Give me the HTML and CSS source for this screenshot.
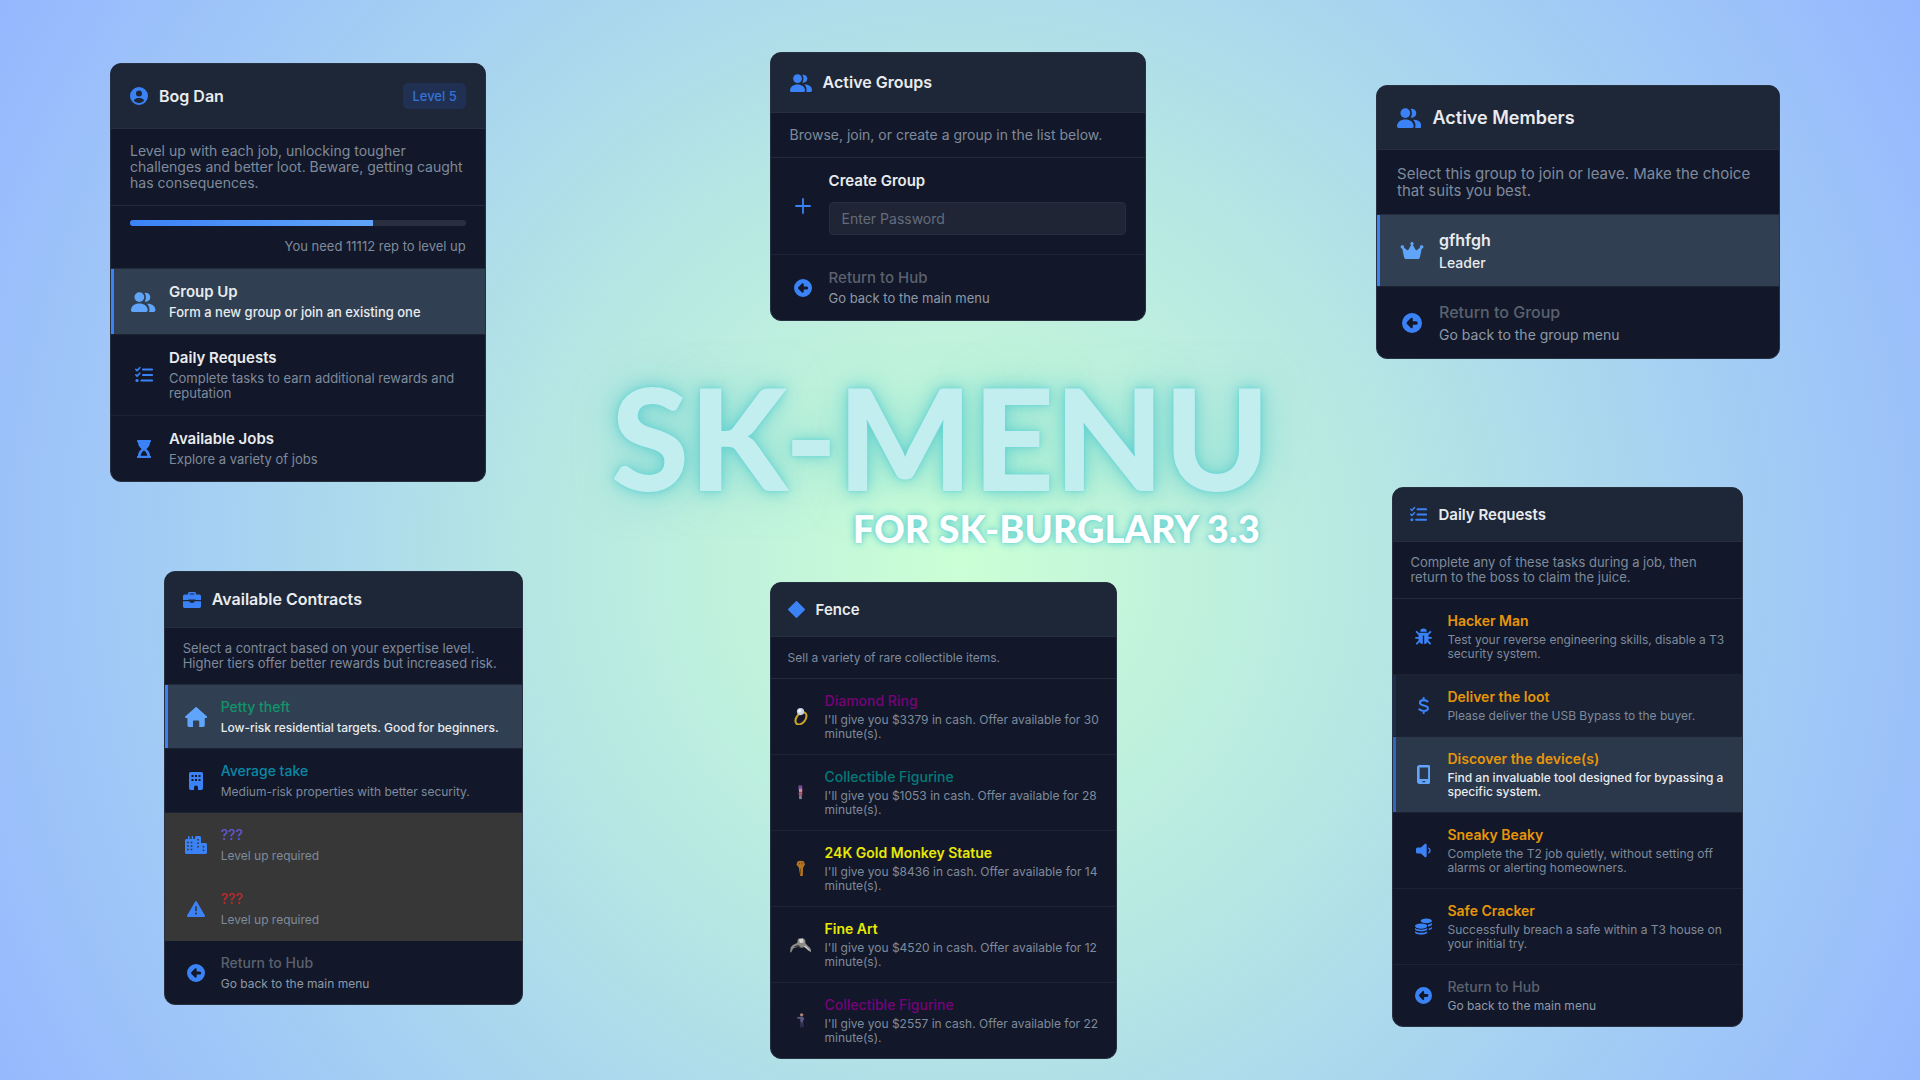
FILE: index.html
```html
<!DOCTYPE html>
<html lang="en">
<head>
<meta charset="utf-8">
<meta name="viewport" content="width=device-width, initial-scale=1">
<title>SK-MENU for SK-BURGLARY 3.3</title>
<link rel="stylesheet" href="styles.css">
</head>
<body>
<svg class="sprite" aria-hidden="true">
  <defs>
    <g id="i-user"><path fill-rule="evenodd" d="M9 0a9 9 0 1 0 0 18A9 9 0 0 0 9 0Zm0 3.600a3 3 0 1 1 0 6 3 3 0 0 1 0-6ZM3.800 13.200C4.900 11.600 7 11 9 11s4.100.6 5.200 2.200C13.100 15 11.200 16 9 16s-4.100-1-5.200-2.800Z"/></g>
    <g id="i-people"><circle cx="7.500" cy="4.600" r="4.400"/><path d="M0 16.500C0 12.600 3.400 10.400 7.500 10.400s7.500 2.200 7.500 6.100c0 .9-.6 1.500-1.500 1.500h-12C.6 18 0 17.400 0 16.500Z"/><path d="M12.300.8a4 4 0 1 1 0 7.700C13.800 6.300 13.800 3 12.300.8Z"/><path d="M14.500 10.500c4.300-.2 7.500 2 7.500 5.800 0 1-.6 1.700-1.500 1.700h-4.200c.9-3-.1-5.800-1.800-7.500Z"/></g>
    <g id="i-list"><g fill="none" stroke="currentColor" stroke-width="2.200" stroke-linecap="round" stroke-linejoin="round"><path d="M8 3.500h9M8 9h9M6.500 14.500H17"/><path stroke-width="1.600" d="M.9 3.400 2.100 4.600 4.800 1.700M.9 8.900l1.200 1.200 2.700-2.900"/></g><circle cx="2" cy="14.500" r="1.600"/></g>
    <g id="i-hourglass"><path fill-rule="evenodd" d="M1 0h12a1 1 0 0 1 0 2.200c0 3-1.300 4.900-3.600 6.800 2.300 1.900 3.600 3.800 3.600 6.800a1 1 0 0 1 0 2.200H1a1 1 0 0 1 0-2.200c0-3 1.300-4.900 3.600-6.800C2.300 7.100 1 5.200 1 2.200A1 1 0 0 1 1 0Zm6 10.600c-1.800 1.500-3 2.900-3.400 5.200h6.800C10 13.500 8.800 12.100 7 10.600Z"/></g>
    <g id="i-plus"><path d="M8 2v14M1 9h14" fill="none" stroke="currentColor" stroke-width="1.800" stroke-linecap="round"/></g>
    <g id="i-back"><path fill-rule="evenodd" d="M9 0a9 9 0 1 0 0 18A9 9 0 0 0 9 0ZM8 4.600c.8-.7 1.700-.1 1.700.8v2.100h3a1.500 1.500 0 0 1 0 3h-3v2.100c0 .9-.9 1.500-1.700.8L4.500 9.900a1.200 1.200 0 0 1 0-1.800Z"/></g>
    <g id="i-crown"><path d="M12 1a1.700 1.700 0 0 1 .9 3.100l2.500 4.500c.4.700 1.100.8 1.700.3l3-2.300a1.700 1.700 0 1 1 1.700 1l-1.900 8.600c-.2 1.100-.9 1.800-2 1.800H6.100c-1.100 0-1.800-.7-2-1.800L2.200 7.600a1.700 1.700 0 1 1 1.700-1l3 2.300c.6.500 1.300.4 1.700-.3l2.500-4.500A1.700 1.700 0 0 1 12 1Z"/></g>
    <g id="i-case"><path fill-rule="evenodd" d="M5 3.400V2.500C5 1.700 5.700 1 6.500 1h5c.8 0 1.500.7 1.500 1.500v.9h3.200c1 0 1.800.8 1.800 1.800V9h-5.500V8.500h-7V9H0V5.200c0-1 .8-1.800 1.800-1.800H5Zm1.600 0h4.800v-.8H6.600v.8ZM0 10.300h6.700v.7c0 .5.300.8.8.8h3c.5 0 .8-.3.8-.8v-.7H18v4.900c0 1-.8 1.800-1.800 1.800H1.800c-1 0-1.800-.8-1.800-1.800v-4.900Z"/></g>
    <g id="i-house"><path d="M9.300.4c.4-.4 1-.4 1.400 0l8.900 7.900c.8.700.4 1.700-.6 1.700h-1.200v6.500c0 .9-.6 1.500-1.500 1.500h-3.500v-4.800c0-.6-.4-1-1-1H8.200c-.6 0-1 .4-1 1V18H3.700c-.9 0-1.500-.6-1.500-1.500V10H1c-1 0-1.400-1-.6-1.700Z"/></g>
    <g id="i-building"><path fill-rule="evenodd" d="M1.700 0h10.600C13.200 0 14 .8 14 1.700v14.600c0 .9-.8 1.700-1.700 1.700H9v-2.500a2 2 0 0 0-4 0V18H1.700C.8 18 0 17.200 0 16.300V1.700C0 .8.800 0 1.700 0ZM2.500 3v2h2V3Zm3.500 0v2h2V3Zm3.500 0v2h2V3Zm-7 4v2h2V7ZM6 7v2h2V7Zm3.500 0v2h2V7Z"/></g>
    <g id="i-city"><path fill-rule="evenodd" d="M3 .8a.8.8 0 0 1 1.600 0V3h2V.8a.8.8 0 0 1 1.600 0V3h1.800V1.500C10 .7 10.700 0 11.500 0h3c.8 0 1.500.7 1.500 1.500V7h4.500c.8 0 1.500.7 1.500 1.500v8c0 .8-.7 1.500-1.500 1.500h-19C.7 18 0 17.300 0 16.500v-12C0 3.700.7 3 1.500 3H3ZM2.200 5.700v1.600h1.600V5.700Zm3.500 0v1.600h1.600V5.700Zm-3.500 3.500v1.600h1.600V9.200Zm3.500 0v1.600h1.600V9.200Zm-3.500 3.500v1.600h1.600v-1.600Zm3.500 0v1.600h1.600v-1.600ZM12.200 3v1.600h1.600V3Zm0 3.500v1.600h1.600V6.500Zm0 3.500v1.600h1.600V10Zm5.500 0v1.600h1.600V10Zm0 3.500v1.600h1.600v-1.600Z"/></g>
    <g id="i-warn"><path fill-rule="evenodd" d="M8.100 1.700c.4-.8 1.400-.8 1.800 0l7.900 13.600c.5.800 0 1.700-1 1.700H1.200c-1 0-1.500-.9-1-1.700ZM8.200 6.200v5h1.600v-5ZM9 12.400a1.100 1.100 0 1 0 0 2.200 1.100 1.100 0 0 0 0-2.200Z"/></g>
    <g id="i-diamond"><path d="M8.200.4c.5-.5 1.100-.5 1.600 0l7.800 7.800c.5.500.5 1.100 0 1.600l-7.800 7.800c-.5.500-1.100.5-1.600 0L.4 9.800c-.5-.5-.5-1.100 0-1.600Z"/></g>
    <g id="i-bug"><path d="M5.500 4a3.500 3.500 0 0 1 7 0Z"/><path d="M5 5h8c1 1 1.300 2 1.300 3.500v3.300c0 2.700-1.900 4.900-4.600 5.200V8H8.300v9c-2.700-.3-4.600-2.500-4.600-5.200V8.500C3.700 7 4 6 5 5Z"/><path fill="none" stroke="currentColor" stroke-width="1.900" stroke-linecap="round" d="M4.500 6.700 1.700 4M13.500 6.700 16.300 4M4 10.400H1M14 10.400h3M4.700 13.700 2 16.500M13.300 13.700l2.700 2.800"/></g>
    <g id="i-dollar"><path fill="none" stroke="currentColor" stroke-width="2.200" stroke-linecap="round" d="M6 1v2.200m0 11.600V17M10 4.600C8.800 3.800 7.400 3.300 6 3.300c-2.200 0-4 1-4 2.700 0 3.900 8.500 2.100 8.500 6 0 1.800-2 2.800-4.300 2.800-1.800 0-3.300-.6-4.700-1.600"/></g>
    <g id="i-phone"><path fill-rule="evenodd" d="M2.300 0h8.400C12 0 13 1 13 2.300v13.400c0 1.300-1 2.300-2.300 2.300H2.300C1 18 0 17 0 15.700V2.300C0 1 1 0 2.300 0Zm.2 2.300v11h8v-11Zm2.700 12.800v1.200h2.600v-1.200Z"/></g>
    <g id="i-horn"><path d="M9.200 2.200C10 1.500 11.300 2 11.300 3.200v11.600c0 1.200-1.300 1.700-2.100 1l-4-3.500H2c-1 0-2-.7-2-1.700V7.400c0-1 1-1.700 2-1.700h3.200Z"/><path fill="none" stroke="currentColor" stroke-width="1.500" stroke-linecap="round" d="M13.500 6.600c1.800 1.100 1.800 3.700 0 4.800"/></g>
    <g id="i-coins"><ellipse cx="12" cy="3" rx="6" ry="2.500"/><path d="M13.500 7c2-.1 3.700-.8 4.500-1.700v1.200c0 1.200-1.700 2.100-4 2.400Zm1 4c1.600-.2 2.800-.8 3.500-1.500v1.200c0 1-1.400 2-3.500 2.300Z"/><ellipse cx="6.500" cy="8.500" rx="6.500" ry="2.800"/><path d="M0 10.700c2.800 2.300 10.200 2.300 13 0v1c0 3.300-13 3.300-13 0ZM0 14c2.800 2.300 10.200 2.300 13 0v1.200c0 3.400-13 3.400-13 0Z"/></g>
    <g id="i-ring"><ellipse cx="9.500" cy="11" rx="7.300" ry="4.700" fill="none" stroke="#c9a227" stroke-width="2.200" transform="rotate(-52 9.500 11)"/><circle cx="9" cy="3.800" r="3.800" fill="#c9d3e6"/><circle cx="8" cy="3" r="1.600" fill="#f2f6ff"/></g>
    <g id="i-figure"><path fill="#7c4a9c" d="M.5 1.500h4V6h-4z"/><path fill="#c98a9d" d="M1 5h3.500v4H1z"/><path fill="#b7566a" d="M.8 9h3.700v3H.8z"/><path fill="#8f8296" d="M1.200 12h2.800v4H1.200z"/></g>
    <g id="i-monkey"><path fill="#b37422" d="M1.500 1.500C3.500.7 6.500.7 8.500 1.500L9.500 5 7.500 8l-.3 9H4.500L3 8 .5 5Z"/><path fill="#7d4c12" d="M3 3h1.200v1.500H3zm3 0h1.200v1.500H6zM4.300 9h1v6h-1z"/></g>
    <g id="i-art"><path fill="#8d8b88" d="M0 17.500.8 12 3 9.500 7.500 7.500 8.500 3l5-1 2.500 2 .5 4 5 5 1.500 4.500-3-1.500-4.500-4-3.500.5-3.500-1-5 1.500L1.500 17Z"/><path fill="#d9d7d3" d="M9.500 3.500 13.500 3l1 4-4 .5Zm6.500 6.500 5 5-.5.500L15 11Z"/><path fill="#3f3d3d" d="M4 11.500 8 9.500l3 1-1.500 1.500-3-.2Z"/></g>
    <g id="i-hero"><circle cx="6" cy="3" r="1.800" fill="#b08474"/><path fill="#5d5784" d="M1 5.500 4.500 5h3L9 8 7.500 8.500 7.700 11h-3L4.500 7.500 1 7Z"/><path fill="#3a3a5c" d="M4.700 11h3L8 16.500H7L6.200 12.500 5.500 16.500h-1Z"/></g>
  </defs>
</svg>

<main class="board">
  <div class="column column-left">
    <section class="panel panel-hub size-m">
      <header class="head">
        <svg class="icon" viewBox="0 0 18 18"><use href="#i-user"/></svg>
        <h2>Bog Dan</h2>
        <span class="badge">Level 5</span>
      </header>
      <p class="about">Level up with each job, unlocking tougher challenges and better loot. Beware, getting caught has consequences.</p>
      <div class="level">
        <progress value="723" max="1000" aria-labelledby="rep"></progress>
        <p id="rep">You need 11112 rep to level up</p>
      </div>
      <ul class="menu">
        <li><button class="row active"><span class="slot"><svg class="icon large" viewBox="0 0 22 18"><use href="#i-people"/></svg></span><span class="text"><b>Group Up</b><small>Form a new group or join an existing one</small></span></button></li>
        <li><button class="row"><span class="slot"><svg class="icon" viewBox="0 0 18 18"><use href="#i-list"/></svg></span><span class="text"><b>Daily Requests</b><small>Complete tasks to earn additional rewards and reputation</small></span></button></li>
        <li><button class="row"><span class="slot"><svg class="icon" viewBox="0 0 14 18"><use href="#i-hourglass"/></svg></span><span class="text"><b>Available Jobs</b><small>Explore a variety of jobs</small></span></button></li>
      </ul>
    </section>

    <section class="panel panel-contracts size-s">
      <header class="head">
        <svg class="icon" viewBox="0 0 18 18"><use href="#i-case"/></svg>
        <h2>Available Contracts</h2>
      </header>
      <p class="about">Select a contract based on your expertise level. Higher tiers offer better rewards but increased risk.</p>
      <ul class="menu">
        <li><button class="row active"><span class="slot"><svg class="icon large" viewBox="0 0 20 18"><use href="#i-house"/></svg></span><span class="text"><b class="plain green">Petty theft</b><small>Low-risk residential targets. Good for beginners.</small></span></button></li>
        <li><button class="row"><span class="slot"><svg class="icon" viewBox="0 0 14 18"><use href="#i-building"/></svg></span><span class="text"><b class="plain cyan">Average take</b><small>Medium-risk properties with better security.</small></span></button></li>
        <li><button class="row locked"><span class="slot"><svg class="icon" viewBox="0 0 22 18"><use href="#i-city"/></svg></span><span class="text"><b class="plain indigo">???</b><small>Level up required</small></span></button></li>
        <li><button class="row locked"><span class="slot"><svg class="icon" viewBox="0 0 18 18"><use href="#i-warn"/></svg></span><span class="text"><b class="plain red">???</b><small>Level up required</small></span></button></li>
        <li><button class="row back"><span class="slot"><svg class="icon" viewBox="0 0 18 18"><use href="#i-back"/></svg></span><span class="text"><b class="plain">Return to Hub</b><small>Go back to the main menu</small></span></button></li>
      </ul>
    </section>
  </div>

  <div class="column column-center">
    <section class="panel panel-groups size-m">
      <header class="head">
        <svg class="icon" viewBox="0 0 22 18"><use href="#i-people"/></svg>
        <h2>Active Groups</h2>
      </header>
      <p class="about">Browse, join, or create a group in the list below.</p>
      <ul class="menu">
        <li class="row"><span class="slot"><svg class="icon" viewBox="0 0 16 18"><use href="#i-plus"/></svg></span><span class="text"><label for="group-password">Create Group</label><input id="group-password" type="password" placeholder="Enter Password"></span></li>
        <li><button class="row back"><span class="slot"><svg class="icon" viewBox="0 0 18 18"><use href="#i-back"/></svg></span><span class="text"><b class="plain">Return to Hub</b><small>Go back to the main menu</small></span></button></li>
      </ul>
    </section>

    <div class="brand">
      <h1>SK-MENU</h1>
      <p>FOR SK-BURGLARY 3.3</p>
    </div>

    <section class="panel panel-fence size-xs">
      <header class="head">
        <svg class="icon" viewBox="0 0 18 18"><use href="#i-diamond"/></svg>
        <h2>Fence</h2>
      </header>
      <p class="about">Sell a variety of rare collectible items.</p>
      <ul class="menu">
        <li><button class="row"><span class="slot"><svg class="icon" viewBox="0 0 18 18"><use href="#i-ring"/></svg></span><span class="text"><b class="plain purple">Diamond Ring</b><small>I'll give you $3379 in cash. Offer available for 30 minute(s).</small></span></button></li>
        <li><button class="row"><span class="slot"><svg class="icon" viewBox="0 0 5 18"><use href="#i-figure"/></svg></span><span class="text"><b class="plain teal">Collectible Figurine</b><small>I'll give you $1053 in cash. Offer available for 28 minute(s).</small></span></button></li>
        <li><button class="row"><span class="slot"><svg class="icon" viewBox="0 0 10 18"><use href="#i-monkey"/></svg></span><span class="text"><b class="yellow">24K Gold Monkey Statue</b><small>I'll give you $8436 in cash. Offer available for 14 minute(s).</small></span></button></li>
        <li><button class="row"><span class="slot"><svg class="icon" viewBox="0 0 23 18"><use href="#i-art"/></svg></span><span class="text"><b class="yellow">Fine Art</b><small>I'll give you $4520 in cash. Offer available for 12 minute(s).</small></span></button></li>
        <li><button class="row"><span class="slot"><svg class="icon" viewBox="0 0 10 18"><use href="#i-hero"/></svg></span><span class="text"><b class="plain purple">Collectible Figurine</b><small>I'll give you $2557 in cash. Offer available for 22 minute(s).</small></span></button></li>
      </ul>
    </section>
  </div>

  <div class="column column-right">
    <section class="panel panel-members size-l">
      <header class="head">
        <svg class="icon" viewBox="0 0 22 18"><use href="#i-people"/></svg>
        <h2>Active Members</h2>
      </header>
      <p class="about">Select this group to join or leave. Make the choice that suits you best.</p>
      <ul class="menu">
        <li><button class="row active"><span class="slot"><svg class="icon" viewBox="0 0 24 20"><use href="#i-crown"/></svg></span><span class="text"><b>gfhfgh</b><small>Leader</small></span></button></li>
        <li><button class="row back"><span class="slot"><svg class="icon" viewBox="0 0 18 18"><use href="#i-back"/></svg></span><span class="text"><b class="plain">Return to Group</b><small>Go back to the group menu</small></span></button></li>
      </ul>
    </section>

    <section class="panel panel-requests size-xs">
      <header class="head">
        <svg class="icon" viewBox="0 0 18 18"><use href="#i-list"/></svg>
        <h2>Daily Requests</h2>
      </header>
      <p class="about">Complete any of these tasks during a job, then return to the boss to claim the juice.</p>
      <ul class="menu">
        <li><button class="row"><span class="slot"><svg class="icon" viewBox="0 0 18 18"><use href="#i-bug"/></svg></span><span class="text"><b class="orange">Hacker Man</b><small>Test your reverse engineering skills, disable a T3 security system.</small></span></button></li>
        <li><button class="row hover"><span class="slot"><svg class="icon" viewBox="0 0 12 18"><use href="#i-dollar"/></svg></span><span class="text"><b class="orange">Deliver the loot</b><small>Please deliver the USB Bypass to the buyer.</small></span></button></li>
        <li><button class="row active soft"><span class="slot"><svg class="icon large" viewBox="0 0 13 18"><use href="#i-phone"/></svg></span><span class="text"><b class="orange">Discover the device(s)</b><small>Find an invaluable tool designed for bypassing a specific system.</small></span></button></li>
        <li><button class="row"><span class="slot"><svg class="icon" viewBox="0 0 16 18"><use href="#i-horn"/></svg></span><span class="text"><b class="orange">Sneaky Beaky</b><small>Complete the T2 job quietly, without setting off alarms or alerting homeowners.</small></span></button></li>
        <li><button class="row"><span class="slot"><svg class="icon" viewBox="0 0 18 18"><use href="#i-coins"/></svg></span><span class="text"><b class="orange">Safe Cracker</b><small>Successfully breach a safe within a T3 house on your initial try.</small></span></button></li>
        <li><button class="row back"><span class="slot"><svg class="icon" viewBox="0 0 18 18"><use href="#i-back"/></svg></span><span class="text"><b class="plain">Return to Hub</b><small>Go back to the main menu</small></span></button></li>
      </ul>
    </section>
  </div>
</main>
</body>
</html>
```
FILE: styles.css
```css
* {
  box-sizing: border-box;
}

body {
  margin: 0;
  min-height: 100vh;
  font-family: Inter, "Liberation Sans", sans-serif;
  background: radial-gradient(circle farthest-corner at 50% 52%, #cbffd5 0%, #b7e7e3 38%, #a5cff3 68%, #95b7ff 100%) no-repeat;
}

h1, h2, p, ul {
  margin: 0;
  padding: 0;
}

ul {
  list-style: none;
}

.sprite {
  display: none;
}

/* Board: three columns of panels */
.board {
  display: grid;
  grid-template-columns: 413fr 655fr 410fr;
  column-gap: 5vw;
  padding: 52px 7.3% 24px 5.73%;
}

.column {
  display: flex;
  flex-direction: column;
  min-width: 0;
}

.column-left {
  padding-top: 11px;
  gap: 89px;
}

.column-right {
  padding-top: 33px;
  gap: 128px;
}

.panel-hub {
  width: 91%;
}

.panel-contracts {
  width: 87%;
  margin-left: auto;
}

.panel-groups {
  width: 57.5%;
  margin-left: 23%;
}

.panel-fence {
  width: 53%;
  margin-left: 23%;
}

.panel-members {
  width: 98.5%;
  margin-left: auto;
}

.panel-requests {
  width: 85.5%;
  margin-left: 5.5%;
}

/* Scale steps */
.size-l {
  --pad: 20px;
  --pad-end: 20px;
  --block: 15px;
  --title: 18px;
  --title-line: 23px;
  --item: 16px;
  --item-line: 20px;
  --desc: 15px;
  --desc-line: 17px;
  --sub: 14px;
  --sub-line: 17px;
  --lead: 4px;
  --icon: 20px;
  --slot: 29px;
  --gap: 13px;
}

.size-m {
  --pad: 19px;
  --pad-end: 19px;
  --block: 14px;
  --title: 16px;
  --title-line: 21px;
  --item: 15px;
  --item-line: 18px;
  --desc: 14px;
  --desc-line: 16px;
  --sub: 13px;
  --sub-line: 15px;
  --lead: 4px;
  --icon: 18px;
  --slot: 27px;
  --gap: 12px;
}

.size-s {
  --pad: 18px;
  --pad-end: 18px;
  --block: 13px;
  --title: 16px;
  --title-line: 19px;
  --item: 14px;
  --item-line: 18px;
  --desc: 13px;
  --desc-line: 15px;
  --sub: 12px;
  --sub-line: 15px;
  --lead: 4px;
  --icon: 18px;
  --slot: 26px;
  --gap: 12px;
}

.size-xs {
  --pad: 17px;
  --pad-end: 14px;
  --block: 13px;
  --title: 15px;
  --title-line: 19px;
  --item: 14px;
  --item-line: 18px;
  --desc: 12px;
  --desc-line: 15px;
  --sub: 12px;
  --sub-line: 14px;
  --lead: 3px;
  --icon: 17px;
  --slot: 26px;
  --gap: 11px;
}

.panel-requests {
  --desc: 13px;
}

/* Panel */
.panel {
  overflow: hidden;
  color: #e9ebee;
  background: #121829;
  border: 1px solid #273142;
  border-radius: 11px;
}

.head {
  display: flex;
  align-items: center;
  gap: 11px;
  padding: var(--pad);
  background: #1e2738;
  border-bottom: 1px solid #252e3e;
}

.head h2 {
  flex: 1;
  font-size: var(--title);
  line-height: var(--title-line);
  font-weight: 600;
}

.icon {
  display: block;
  flex: none;
  height: var(--icon);
  color: #3b82f6;
  fill: currentColor;
}

.icon.large {
  height: calc(var(--icon) + 2px);
}

.badge {
  padding: 5px 9px;
  font-size: 13px;
  line-height: 16px;
  font-weight: 500;
  color: #3572d6;
  background: #1f3052;
  border-radius: 5px;
}

.about {
  padding: var(--block) var(--pad);
  font-size: var(--desc);
  line-height: var(--desc-line);
  color: #7f8a9c;
  border-bottom: 1px solid #222b3b;
}

.level {
  padding: var(--block) var(--pad);
  border-bottom: 1px solid #222b3b;
}

.level p {
  margin-top: 13px;
  text-align: right;
  font-size: var(--sub);
  line-height: var(--sub-line);
  color: #7f8a9c;
}

progress {
  display: block;
  width: 100%;
  height: 6px;
  appearance: none;
  border: 0;
}

progress::-webkit-progress-bar {
  background: #292f3e;
  border-radius: 3px;
}

progress::-webkit-progress-value {
  background: linear-gradient(90deg, #3b82f6, #60a5fa);
  border-radius: 3px 0 0 3px;
}

/* Menu rows */
.row {
  display: flex;
  align-items: center;
  gap: var(--gap);
  width: 100%;
  padding: var(--block) var(--pad-end) var(--block) var(--pad);
  font: inherit;
  text-align: left;
  color: inherit;
  background: none;
  border: 0;
  border-bottom: 1px solid #1b2334;
}

li:last-child .row {
  border-bottom: 0;
}

.slot {
  display: flex;
  flex: none;
  justify-content: center;
  width: var(--slot);
}

.text {
  display: flex;
  flex: 1;
  flex-direction: column;
  gap: var(--lead);
  min-width: 0;
}

.text b,
.text label {
  font-size: var(--item);
  line-height: var(--item-line);
  font-weight: 600;
}

.text .plain {
  font-weight: 500;
}

.text small {
  font-size: var(--sub);
  line-height: var(--sub-line);
  color: #7f8a9c;
}

.text input {
  width: 100%;
  height: 33px;
  margin: 8px 0 5px;
  padding: 0 12px;
  font: inherit;
  font-size: var(--desc);
  color: #e9ebee;
  background: #1f2535;
  border: 1px solid #272f3f;
  border-radius: 4px;
}

.text input::placeholder {
  color: #646c7b;
}

.active {
  background: #304052;
  box-shadow: inset 3px 0 #3b82f6;
}

.active.soft {
  background: #2b384b;
  box-shadow: inset 3px 0 #2f66bf;
}

.active .icon {
  color: #60a5fa;
}

.active small {
  font-weight: 500;
  color: #e9ebee;
}

.hover {
  background: #192132;
  box-shadow: inset 3px 0 #1b2c4e;
}

.locked {
  background: #363736;
  border-bottom-color: #363736;
}

.back b {
  color: #5b616f;
}

.back small {
  color: #8e98a8;
}

.green { color: #10946a; }
.cyan { color: #0b88a6; }
.indigo { color: #6158cf; }
.red { color: #bb2a2c; }
.purple { color: #77037a; }
.teal { color: #047b79; }
.yellow { color: #e8e806; }
.orange { color: #e69609; }

/* Brand title */
.brand {
  padding: 44px 14px 35px 0;
  font-family: Lato, "Liberation Sans", sans-serif;
  white-space: nowrap;
}

.brand h1 {
  margin-left: -8px;
  font-size: 142px;
  line-height: 142px;
  font-weight: 900;
  color: #c3eef0;
  text-shadow: 0 0 3px #6bd6d9, 0 0 14px rgba(79, 201, 204, 0.8), 0 0 44px rgba(80, 200, 205, 0.6);
}

.brand p {
  margin-top: 2px;
  text-align: right;
  font-size: 38px;
  line-height: 38px;
  font-weight: 900;
  color: #fff;
  text-shadow: 0 0 3px #6bd6d9, 0 0 8px #4fc9cc;
}
```
